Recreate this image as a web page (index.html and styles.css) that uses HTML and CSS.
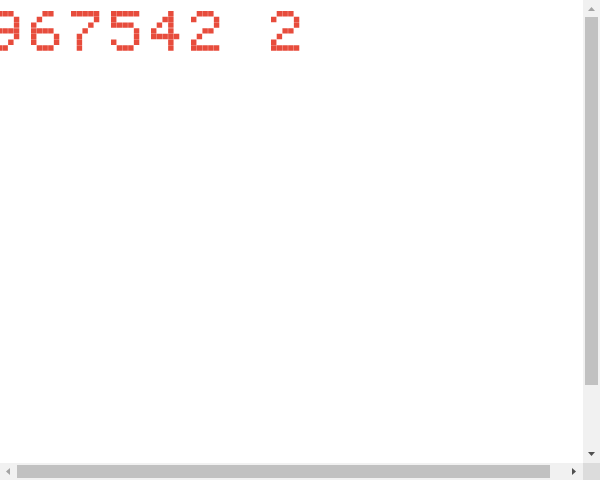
FILE: index.html
```html
<!DOCTYPE html>
<html lang="en">
<head>
<meta charset="utf-8">
<title>Dot matrix</title>
<link rel="stylesheet" href="styles.css">
</head>
<body>
<svg class="defs" aria-hidden="true">
  <defs>
    <path id="d9" d="M1 0h.95v.95h-.95zM2 0h.95v.95h-.95zM3 0h.95v.95h-.95zM0 1h.95v.95h-.95zM4 1h.95v.95h-.95zM0 2h.95v.95h-.95zM4 2h.95v.95h-.95zM1 3h.95v.95h-.95zM2 3h.95v.95h-.95zM3 3h.95v.95h-.95zM4 3h.95v.95h-.95zM4 4h.95v.95h-.95zM3 5h.95v.95h-.95zM1 6h.95v.95h-.95zM2 6h.95v.95h-.95z"/>
    <path id="d6" d="M2 0h.95v.95h-.95zM3 0h.95v.95h-.95zM1 1h.95v.95h-.95zM0 2h.95v.95h-.95zM0 3h.95v.95h-.95zM1 3h.95v.95h-.95zM2 3h.95v.95h-.95zM3 3h.95v.95h-.95zM0 4h.95v.95h-.95zM4 4h.95v.95h-.95zM0 5h.95v.95h-.95zM4 5h.95v.95h-.95zM1 6h.95v.95h-.95zM2 6h.95v.95h-.95zM3 6h.95v.95h-.95z"/>
    <path id="d7" d="M0 0h.95v.95h-.95zM1 0h.95v.95h-.95zM2 0h.95v.95h-.95zM3 0h.95v.95h-.95zM4 0h.95v.95h-.95zM4 1h.95v.95h-.95zM3 2h.95v.95h-.95zM2 3h.95v.95h-.95zM1 4h.95v.95h-.95zM1 5h.95v.95h-.95zM1 6h.95v.95h-.95z"/>
    <path id="d5" d="M0 0h.95v.95h-.95zM1 0h.95v.95h-.95zM2 0h.95v.95h-.95zM3 0h.95v.95h-.95zM4 0h.95v.95h-.95zM0 1h.95v.95h-.95zM0 2h.95v.95h-.95zM1 2h.95v.95h-.95zM2 2h.95v.95h-.95zM3 2h.95v.95h-.95zM4 3h.95v.95h-.95zM4 4h.95v.95h-.95zM0 5h.95v.95h-.95zM4 5h.95v.95h-.95zM1 6h.95v.95h-.95zM2 6h.95v.95h-.95zM3 6h.95v.95h-.95z"/>
    <path id="d4" d="M3 0h.95v.95h-.95zM2 1h.95v.95h-.95zM3 1h.95v.95h-.95zM1 2h.95v.95h-.95zM3 2h.95v.95h-.95zM0 3h.95v.95h-.95zM3 3h.95v.95h-.95zM0 4h.95v.95h-.95zM1 4h.95v.95h-.95zM2 4h.95v.95h-.95zM3 4h.95v.95h-.95zM4 4h.95v.95h-.95zM3 5h.95v.95h-.95zM3 6h.95v.95h-.95z"/>
    <path id="d2" d="M1 0h.95v.95h-.95zM2 0h.95v.95h-.95zM3 0h.95v.95h-.95zM0 1h.95v.95h-.95zM4 1h.95v.95h-.95zM4 2h.95v.95h-.95zM2 3h.95v.95h-.95zM3 3h.95v.95h-.95zM1 4h.95v.95h-.95zM0 5h.95v.95h-.95zM0 6h.95v.95h-.95zM1 6h.95v.95h-.95zM2 6h.95v.95h-.95zM3 6h.95v.95h-.95zM4 6h.95v.95h-.95z"/>
  </defs>
</svg>
<div class="window">
  <main class="viewport">
    <div class="display" role="img" aria-label="967542 2">
      <svg class="glyph" viewBox="0 0 7 7"><use href="#d9"/></svg>
      <svg class="glyph" viewBox="0 0 7 7"><use href="#d6"/></svg>
      <svg class="glyph" viewBox="0 0 7 7"><use href="#d7"/></svg>
      <svg class="glyph" viewBox="0 0 7 7"><use href="#d5"/></svg>
      <svg class="glyph" viewBox="0 0 7 7"><use href="#d4"/></svg>
      <svg class="glyph" viewBox="0 0 7 7"><use href="#d2"/></svg>
      <span class="blank"></span>
      <svg class="glyph" viewBox="0 0 7 7"><use href="#d2"/></svg>
    </div>
  </main>
  <div class="vbar">
    <div class="arrow">
      <svg width="17" height="17" viewBox="0 0 17 17"><path class="dim" d="M5 11h7l-3.5-4z"/></svg>
    </div>
    <div class="vtrack"><div class="vthumb"></div></div>
    <div class="arrow">
      <svg width="17" height="17" viewBox="0 0 17 17"><path class="dark" d="M5 6h7l-3.5 4z"/></svg>
    </div>
  </div>
  <div class="hbar">
    <div class="arrow">
      <svg width="17" height="17" viewBox="0 0 17 17"><path class="dim" d="M10 5v7l-4-3.5z"/></svg>
    </div>
    <div class="htrack"><div class="hthumb"></div></div>
    <div class="arrow">
      <svg width="17" height="17" viewBox="0 0 17 17"><path class="dark" d="M6 5v7l4-3.5z"/></svg>
    </div>
  </div>
  <div class="corner"></div>
</div>
</body>
</html>
```

FILE: styles.css
```css
html, body {
  margin: 0;
  padding: 0;
  background: #ffffff;
  overflow: hidden;
}

.defs {
  display: block;
  width: 0;
  height: 0;
  overflow: hidden;
}

.window {
  width: 600px;
  height: 480px;
  display: grid;
  grid-template-columns: 583px 17px;
  grid-template-rows: 463px 17px;
}

.viewport {
  overflow: hidden;
  padding-top: 11px;
  box-sizing: border-box;
  background: #ffffff;
}

.display {
  display: flex;
  margin-left: -9.3px;
  fill: #e74c3c;
}

.glyph {
  display: block;
  flex: 0 0 40px;
  width: 40px;
  height: 40px;
}

.blank {
  flex: 0 0 40px;
  height: 40px;
}

.vbar {
  display: flex;
  flex-direction: column;
  background: #f1f1f1;
}

.hbar {
  display: flex;
  background: #f1f1f1;
}

.arrow {
  flex: 0 0 17px;
  width: 17px;
  height: 17px;
}

.arrow svg {
  display: block;
}

.dim {
  fill: #a3a3a3;
}

.dark {
  fill: #505050;
}

.vtrack {
  flex: 1;
  padding: 0 2px;
}

.vthumb {
  height: 368px;
  background: #c1c1c1;
}

.htrack {
  flex: 1;
  padding: 2px 0;
}

.hthumb {
  width: 533px;
  height: 13px;
  background: #c1c1c1;
}

.corner {
  background: #dcdcdc;
}
```
